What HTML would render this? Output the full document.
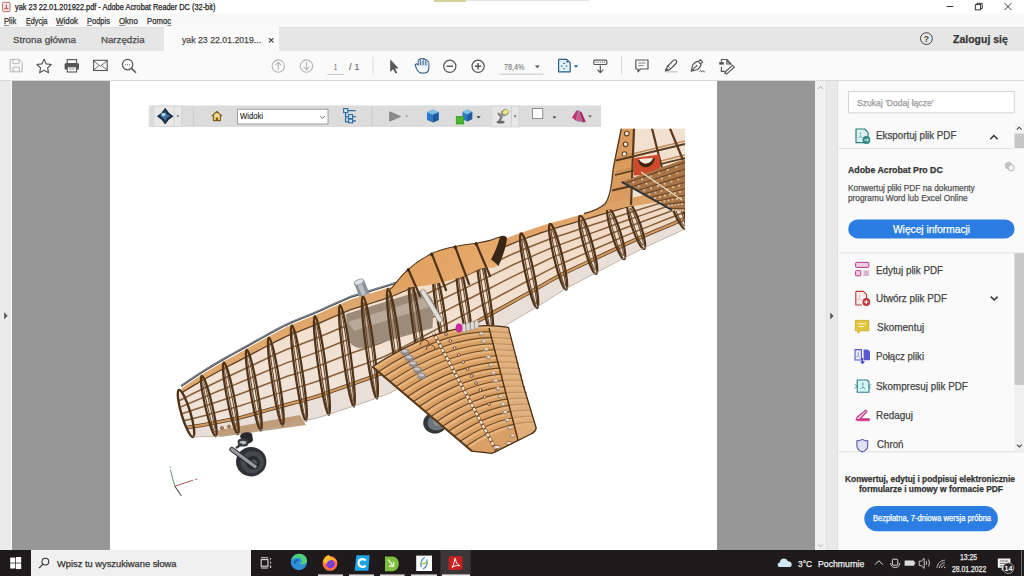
<!DOCTYPE html>
<html><head><meta charset="utf-8">
<style>
html,body{margin:0;padding:0;}
body{width:1024px;height:576px;overflow:hidden;position:relative;background:#fff;font-family:"Liberation Sans",sans-serif;}
.a{position:absolute;}
.t{position:absolute;white-space:nowrap;line-height:1;transform-origin:0 0;font-family:"Liberation Sans",sans-serif;}
.t u{text-decoration-thickness:0.5px;text-underline-offset:1.2px;text-decoration-color:#888;}
.t{-webkit-text-stroke:0.25px currentColor;}
svg{position:absolute;overflow:visible;}
</style></head><body>
<!-- title bar -->
<div class="a" style="left:0;top:0;width:1024px;height:14px;background:#ffffff"></div>
<div class="a" style="left:434px;top:0;width:32px;height:1.5px;background:#d6d09a"></div>
<div class="a" style="left:466px;top:0;width:123px;height:1px;background:#e4e4e4"></div>
<!-- menu bar -->
<div class="a" style="left:0;top:14px;width:1024px;height:13px;background:#f9f9f9"></div>
<!-- tab bar -->
<div class="a" style="left:0;top:27px;width:1024px;height:24px;background:#e6e6e6"></div>
<div class="a" style="left:0;top:27px;width:1024px;height:1px;background:#dedede"></div>
<div class="a" style="left:164px;top:27px;width:115px;height:24px;background:#fafafa"></div>
<!-- toolbar -->
<div class="a" style="left:0;top:51px;width:1024px;height:29px;background:#fafafa"></div>
<div class="a" style="left:0;top:80px;width:1024px;height:1px;background:#d9d9d9"></div>
<!-- left strip -->
<div class="a" style="left:0;top:81px;width:11px;height:469px;background:#ebebeb"></div>
<div class="a" style="left:11px;top:81px;width:1px;height:469px;background:#f8f8f8"></div>
<!-- canvas -->
<div class="a" style="left:12px;top:81px;width:803px;height:469px;background:#979797"></div>
<div class="a" style="left:110px;top:81px;width:607px;height:469px;background:#ffffff"></div>
<!-- right scroll strip -->
<div class="a" style="left:815px;top:81px;width:11px;height:469px;background:#f0f0f0"></div>
<div class="a" style="left:826px;top:81px;width:11px;height:469px;background:#e9e9e9"></div>
<div class="a" style="left:837px;top:81px;width:2px;height:469px;background:#f7f7f7"></div>
<!-- right panel -->
<div class="a" style="left:839px;top:81px;width:185px;height:469px;background:#fafafa"></div>
<!-- taskbar -->
<div class="a" style="left:0;top:550px;width:1024px;height:26px;background:#1f1a1b"></div>
<div class="a" style="left:31px;top:550px;width:220px;height:26px;background:#f0f0f0"></div>
<svg width="1024" height="576" viewBox="0 0 1024 576" style="left:0;top:0">
<defs><clipPath id="vc"><rect x="110" y="128.5" width="575" height="420"/></clipPath>
<linearGradient id="fus" x1="0" y1="0" x2="0.25" y2="1"><stop offset="0" stop-color="#efd3b8"/><stop offset="0.6" stop-color="#f3e0cf"/><stop offset="1" stop-color="#ede5de"/></linearGradient>
<linearGradient id="hump" x1="0" y1="0" x2="1" y2="0.3"><stop offset="0" stop-color="#dd9d5b"/><stop offset="1" stop-color="#e7ab6d"/></linearGradient>
<linearGradient id="wing" x1="0" y1="0" x2="1" y2="1"><stop offset="0" stop-color="#e2a86d"/><stop offset="1" stop-color="#d89b62"/></linearGradient>
</defs><g clip-path="url(#vc)">
<path d="M179.0 390.0 L187.8 384.1 L196.7 378.1 L205.5 372.6 L214.3 367.2 L223.2 361.9 L232.0 357.0 L240.8 352.1 L249.6 347.2 L258.5 342.2 L267.3 337.3 L276.1 332.6 L285.0 327.9 L293.8 323.9 L302.6 320.3 L311.5 316.8 L320.3 313.0 L329.1 309.0 L337.9 305.0 L346.8 301.1 L355.6 298.0 L364.4 295.3 L373.3 292.6 L382.1 289.8 L390.9 287.1 L399.8 283.8 L408.6 280.1 L417.4 276.3 L426.3 272.6 L435.1 268.8 L443.9 265.0 L452.7 261.3 L461.6 257.5 L470.4 253.8 L479.2 250.0 L488.1 246.3 L496.9 242.5 L505.7 238.8 L514.6 235.0 L523.4 231.9 L532.2 229.0 L541.1 226.0 L549.9 223.3 L558.7 221.0 L567.5 218.6 L576.4 216.2 L585.2 213.8 L594.0 211.3 L602.9 208.9 L611.7 206.6 L620.5 204.2 L629.4 201.9 L638.2 199.5 L647.0 197.1 L655.8 194.8 L664.7 192.4 L673.5 190.1 L682.3 187.7 L691.2 185.4 L700.0 183.0 L700.0 222.0 L691.4 226.0 L682.8 229.9 L674.2 233.9 L665.7 237.9 L657.1 241.9 L648.5 245.8 L639.9 249.8 L631.3 254.3 L622.7 258.8 L614.1 263.3 L605.5 267.8 L597.0 272.3 L588.4 276.8 L579.8 281.3 L571.2 285.8 L562.6 290.7 L554.0 296.1 L545.4 301.6 L536.9 307.0 L528.3 312.0 L519.7 317.1 L511.1 322.1 L502.5 327.1 L493.9 332.2 L485.3 337.2 L476.8 342.3 L468.2 347.3 L459.6 352.4 L451.0 357.4 L442.4 362.4 L433.8 367.5 L425.2 372.5 L416.6 377.6 L408.1 382.6 L399.5 387.6 L390.9 392.7 L382.3 396.0 L373.7 399.1 L365.1 402.2 L356.5 405.1 L348.0 407.9 L339.4 410.8 L330.8 413.7 L322.2 416.5 L313.6 418.7 L305.0 420.6 L296.4 422.4 L287.9 424.2 L279.3 426.0 L270.7 427.8 L262.1 429.7 L253.5 431.6 L244.9 433.1 L236.3 434.0 L227.7 434.9 L219.2 435.8 L210.6 436.4 L202.0 436.7 L193.4 437.0 L193.0 437.0 L190.0 432.7 L187.2 428.5 L184.6 424.2 L182.5 419.9 L180.7 415.6 L179.4 411.4 L178.6 407.1 L178.3 402.8 L178.3 398.5 L178.6 394.3 L179.0 390.0Z" fill="url(#fus)"/>
<path d="M187.7 427.4 L201.0 425.3 L214.3 422.9 L227.7 420.2 L241.0 417.5 L254.3 413.8 L267.7 410.0 L281.0 406.3 L294.3 402.6 L307.7 399.2 L321.0 395.1 L334.3 390.3 L347.7 385.6 L361.0 380.9 L374.3 376.2 L387.7 370.8 L401.0 363.7 L414.3 356.3 L427.7 348.9 L441.0 341.5 L454.3 334.1 L467.7 326.8 L481.0 319.4 L494.3 312.0 L507.7 304.6 L521.0 297.2 L534.3 289.9 L547.7 282.2 L561.0 274.8 L574.3 268.4 L587.7 262.1 L601.0 255.8 L614.3 249.5 L627.7 243.2 L641.0 237.3 L654.3 231.6 L667.7 226.0 L681.0 220.3 L694.3 214.9 L707.7 214.2 L700.0 222.0 L687.0 228.0 L674.0 234.0 L661.0 240.0 L648.0 246.0 L635.1 252.3 L622.1 259.1 L609.1 265.9 L596.1 272.8 L583.1 279.6 L570.1 286.4 L557.1 294.2 L544.1 302.4 L531.1 310.3 L518.1 318.0 L505.2 325.6 L492.2 333.2 L479.2 340.8 L466.2 348.5 L453.2 356.1 L440.2 363.7 L427.2 371.4 L414.2 379.0 L401.2 386.6 L388.2 393.8 L375.3 398.6 L362.3 403.2 L349.3 407.5 L336.3 411.8 L323.3 416.2 L310.3 419.4 L297.3 422.2 L284.3 424.9 L271.3 427.7 L258.3 430.5 L245.4 433.1 L232.4 434.4 L219.4 435.8 L206.4 436.5 L193.4 437.0Z" fill="#e9dfd8"/>
<path d="M179.3 400.8 L192.6 393.8 L205.9 387.2 L219.3 380.7 L232.6 374.6 L245.9 368.3 L259.3 362.0 L272.6 355.7 L285.9 349.7 L299.3 344.7 L312.6 339.8 L325.9 334.2 L339.3 328.6 L352.6 323.4 L365.9 319.1 L379.3 314.6 L392.6 309.6 L405.9 303.5 L419.3 297.3 L432.6 291.1 L445.9 285.0 L459.3 278.8 L472.6 272.6 L485.9 266.4 L499.3 260.2 L512.6 254.0 L525.9 248.5 L539.3 243.1 L552.6 238.1 L565.9 233.7 L579.3 229.3 L592.6 224.8 L605.9 220.4 L619.3 216.0 L632.6 211.7 L645.9 207.6 L659.3 203.4 L672.6 199.2 L685.9 195.1 L699.3 192.4" fill="none" stroke="#86603c" stroke-width="1.6"/>
<path d="M179.7 407.4 L193.1 401.7 L206.4 396.1 L219.7 390.5 L233.1 385.4 L246.4 379.7 L259.7 374.0 L273.1 368.4 L286.4 362.9 L299.7 358.4 L313.1 353.6 L326.4 348.2 L339.7 342.8 L353.1 337.7 L366.4 333.4 L379.7 328.6 L393.1 323.1 L406.4 316.7 L419.7 310.2 L433.1 303.7 L446.4 297.3 L459.7 290.8 L473.1 284.3 L486.4 277.8 L499.7 271.3 L513.1 264.8 L526.4 258.9 L539.7 252.9 L553.1 247.3 L566.4 242.4 L579.7 237.5 L593.1 232.6 L606.4 227.7 L619.7 222.8 L633.1 218.1 L646.4 213.6 L659.7 209.0 L673.1 204.5 L686.4 200.0 L699.7 197.8" fill="none" stroke="#86603c" stroke-width="1.5"/>
<path d="M181.3 414.1 L194.6 409.5 L208.0 405.0 L221.3 400.4 L234.6 396.1 L248.0 391.1 L261.3 386.0 L274.6 381.0 L288.0 376.1 L301.3 372.0 L314.6 367.4 L328.0 362.3 L341.3 357.1 L354.6 352.1 L368.0 347.6 L381.3 342.7 L394.6 336.6 L408.0 329.9 L421.3 323.1 L434.6 316.3 L448.0 309.6 L461.3 302.8 L474.6 296.0 L488.0 289.2 L501.3 282.4 L514.6 275.6 L528.0 269.2 L541.3 262.7 L554.6 256.4 L568.0 251.1 L581.3 245.7 L594.6 240.3 L608.0 234.9 L621.3 229.6 L634.6 224.5 L648.0 219.6 L661.3 214.7 L674.6 209.7 L688.0 205.0 L701.3 203.3" fill="none" stroke="#86603c" stroke-width="1.6"/>
<path d="M184.0 420.8 L197.3 417.4 L210.6 414.0 L224.0 410.3 L237.3 406.8 L250.6 402.4 L264.0 398.0 L277.3 393.6 L290.6 389.4 L304.0 385.6 L317.3 381.2 L330.6 376.3 L344.0 371.3 L357.3 366.5 L370.6 361.9 L384.0 356.7 L397.3 350.2 L410.6 343.1 L424.0 336.0 L437.3 328.9 L450.6 321.8 L464.0 314.8 L477.3 307.7 L490.6 300.6 L504.0 293.5 L517.3 286.4 L530.6 279.5 L544.0 272.4 L557.3 265.6 L570.6 259.8 L584.0 253.9 L597.3 248.0 L610.6 242.2 L624.0 236.4 L637.3 230.9 L650.6 225.6 L664.0 220.3 L677.3 215.0 L690.6 210.0 L704.0 208.7" fill="none" stroke="#86603c" stroke-width="1.5"/>
<path d="M187.7 427.4 L201.0 425.3 L214.3 422.9 L227.7 420.2 L241.0 417.5 L254.3 413.8 L267.7 410.0 L281.0 406.3 L294.3 402.6 L307.7 399.2 L321.0 395.1 L334.3 390.3 L347.7 385.6 L361.0 380.9 L374.3 376.2 L387.7 370.8 L401.0 363.7 L414.3 356.3 L427.7 348.9 L441.0 341.5 L454.3 334.1 L467.7 326.8 L481.0 319.4 L494.3 312.0 L507.7 304.6 L521.0 297.2 L534.3 289.9 L547.7 282.2 L561.0 274.8 L574.3 268.4 L587.7 262.1 L601.0 255.8 L614.3 249.5 L627.7 243.2 L641.0 237.3 L654.3 231.6 L667.7 226.0 L681.0 220.3 L694.3 214.9 L707.7 214.2" fill="none" stroke="#5e3e22" stroke-width="3.8"/>
<path d="M187.7 427.4 L201.0 425.3 L214.3 422.9 L227.7 420.2 L241.0 417.5 L254.3 413.8 L267.7 410.0 L281.0 406.3 L294.3 402.6 L307.7 399.2 L321.0 395.1 L334.3 390.3 L347.7 385.6 L361.0 380.9 L374.3 376.2 L387.7 370.8 L401.0 363.7 L414.3 356.3 L427.7 348.9 L441.0 341.5 L454.3 334.1 L467.7 326.8 L481.0 319.4 L494.3 312.0 L507.7 304.6 L521.0 297.2 L534.3 289.9 L547.7 282.2 L561.0 274.8 L574.3 268.4 L587.7 262.1 L601.0 255.8 L614.3 249.5 L627.7 243.2 L641.0 237.3 L654.3 231.6 L667.7 226.0 L681.0 220.3 L694.3 214.9 L707.7 214.2" fill="none" stroke="#d29a5e" stroke-width="2.2"/>
<path d="M214 431 L300 415 L306 425 L220 437 Z" fill="#b89068" opacity="0.85"/>
<circle cx="222" cy="428" r="1.6" fill="#a88458" stroke="#6a4a2a" stroke-width="0.6"/>
<circle cx="229" cy="426.5" r="1.6" fill="#a88458" stroke="#6a4a2a" stroke-width="0.6"/>
<circle cx="236" cy="425" r="1.6" fill="#a88458" stroke="#6a4a2a" stroke-width="0.6"/>
<path d="M182.0 388.0 L192.6 380.9 L203.1 374.0 L213.7 367.6 L224.3 361.2 L234.9 355.4 L245.4 349.5 L256.0 343.6 L266.6 337.7 L277.1 332.1 L287.7 326.4 L298.3 322.1 L308.9 317.8 L319.4 313.4 L330.0 308.6 L340.6 303.9 L351.1 299.4 L361.7 296.1 L372.3 292.9 L382.9 289.6 L393.4 286.4 L404.0 282.0 L414.6 277.5 L425.1 273.0 L435.7 268.5 L446.3 264.0 L456.9 259.6 L467.4 255.1 L478.0 250.6 L488.6 246.1 L499.1 241.6 L509.7 237.1 L520.3 232.9 L530.9 229.4 L541.4 225.9 L552.0 222.8 L562.6 219.9 L573.1 217.1 L583.7 214.2 L594.3 211.3 L604.9 208.4 L615.4 205.6 L626.0 202.8 L636.6 199.9 L647.1 197.1 L657.7 194.3 L668.3 191.5 L678.9 188.6 L689.4 185.8 L700.0 183.0 L699.5 186.9 L689.0 189.4 L678.4 192.3 L667.8 195.3 L657.3 198.4 L646.7 201.4 L636.1 204.4 L625.5 207.5 L615.0 210.6 L604.4 213.6 L593.8 216.8 L583.3 220.0 L572.7 223.1 L562.1 226.2 L551.5 229.3 L541.0 232.8 L530.4 236.7 L519.8 240.5 L509.3 244.9 L498.7 249.5 L488.1 254.2 L477.5 258.8 L467.0 263.5 L456.4 268.2 L445.8 272.8 L435.3 277.5 L424.7 282.2 L414.1 286.8 L403.5 291.5 L393.0 296.0 L382.4 299.6 L371.8 303.0 L361.3 306.3 L350.7 309.6 L340.1 314.1 L329.5 318.7 L319.0 323.3 L308.4 327.7 L297.8 331.8 L287.3 335.9 L276.7 341.2 L266.1 346.5 L255.5 352.1 L245.0 357.6 L234.4 363.1 L223.8 368.5 L213.3 374.3 L202.7 380.2 L192.1 386.4 L181.5 392.9Z" fill="#dea366" opacity="0.95"/>
<path d="M180.0 387.7 L187.4 382.7 L194.8 377.7 L202.2 373.0 L209.7 368.4 L217.1 363.9 L224.5 359.5 L231.9 355.4 L239.3 351.3 L246.7 347.2 L254.1 343.1 L261.6 338.9 L269.0 334.8 L276.4 330.9 L283.8 326.9 L291.2 323.3 L298.6 320.3 L306.0 317.4 L313.4 314.4 L320.9 311.1 L328.3 307.8 L335.7 304.5 L343.1 301.1 L350.5 298.0 L357.9 295.7 L365.3 293.4 L372.8 291.1 L380.2 288.8 L387.6 286.6 L395.0 284.2" fill="none" stroke="#ffffff" stroke-width="1.6"/>
<path d="M181.0 386.1 L188.4 381.1 L195.8 376.1 L203.2 371.4 L210.7 366.8 L218.1 362.3 L225.5 358.0 L232.9 353.9 L240.3 349.8 L247.7 345.7 L255.1 341.5 L262.6 337.4 L270.0 333.3 L277.4 329.3 L284.8 325.4 L292.2 321.9 L299.6 318.9 L307.0 316.0 L314.4 313.0 L321.9 309.7 L329.3 306.3 L336.7 303.0 L344.1 299.7 L351.5 296.6 L358.9 294.4 L366.3 292.1 L373.8 289.8 L381.2 287.5 L388.6 285.2 L396.0 282.8" fill="none" stroke="#4a4c52" stroke-width="2.2"/>
<path d="M181.0 385.7 L188.4 380.7 L195.8 375.7 L203.2 371.0 L210.7 366.4 L218.1 361.9 L225.5 357.6 L232.9 353.5 L240.3 349.4 L247.7 345.3 L255.1 341.1 L262.6 337.0 L270.0 332.9 L277.4 328.9 L284.8 325.0 L292.2 321.5 L299.6 318.5 L307.0 315.6 L314.4 312.6 L321.9 309.3 L329.3 305.9 L336.7 302.6 L344.1 299.3 L351.5 296.2 L358.9 294.0 L366.3 291.7 L373.8 289.4 L381.2 287.1 L388.6 284.8 L396.0 282.4" fill="none" stroke="#a8acb2" stroke-width="0.7"/>
<path d="M181.5 392.9 L192.1 386.4 L202.7 380.2 L213.3 374.3 L223.8 368.5 L234.4 363.1 L245.0 357.6 L255.5 352.1 L266.1 346.5 L276.7 341.2 L287.3 335.9 L297.8 331.8 L308.4 327.7 L319.0 323.3 L329.5 318.7 L340.1 314.1 L350.7 309.6 L361.3 306.3 L371.8 303.0 L382.4 299.6 L393.0 296.0 L403.5 291.5 L414.1 286.8 L424.7 282.2 L435.3 277.5 L445.8 272.8 L456.4 268.2 L467.0 263.5 L477.5 258.8 L488.1 254.2 L498.7 249.5 L509.3 244.9 L519.8 240.5 L530.4 236.7 L541.0 232.8 L551.5 229.3 L562.1 226.2 L572.7 223.1 L583.3 220.0 L593.8 216.8 L604.4 213.6 L615.0 210.6 L625.5 207.5 L636.1 204.4 L646.7 201.4 L657.3 198.4 L667.8 195.3 L678.4 192.3 L689.0 189.4 L699.5 186.9" fill="none" stroke="#5e3e22" stroke-width="1.3"/>
<path d="M346 314 L420 291 Q433 294 433.5 305 L432.5 328 L362 348.5 Q349 347 347.5 336 Z" fill="#9c8b78"/>
<path d="M348 322 L424 298 Q430 300 432 306 L354 331 Z" fill="#b8aa9a"/>
<ellipse cx="186.0" cy="413.5" rx="4.5" ry="24.5" transform="rotate(-16.6 186.0 413.5)" fill="none" stroke="#4e321a" stroke-width="2.4"/>
<ellipse cx="208.8" cy="406.1" rx="3.5" ry="31.0" transform="rotate(-13.1 208.8 406.1)" fill="none" stroke="#4e321a" stroke-width="2.2"/>
<ellipse cx="208.8" cy="407.1" rx="1.3" ry="26.0" transform="rotate(-13.1 208.8 406.1)" fill="none" stroke="#6a4a2a" stroke-width="1.1"/>
<ellipse cx="230.8" cy="398.3" rx="3.6" ry="36.5" transform="rotate(-11.1 230.8 398.3)" fill="none" stroke="#4e321a" stroke-width="2.2"/>
<ellipse cx="230.8" cy="399.3" rx="1.4" ry="31.5" transform="rotate(-11.1 230.8 398.3)" fill="none" stroke="#6a4a2a" stroke-width="1.1"/>
<ellipse cx="253.8" cy="390.1" rx="3.6" ry="40.9" transform="rotate(-9.9 253.8 390.1)" fill="none" stroke="#4e321a" stroke-width="2.2"/>
<ellipse cx="253.8" cy="391.1" rx="1.4" ry="35.9" transform="rotate(-9.9 253.8 390.1)" fill="none" stroke="#6a4a2a" stroke-width="1.1"/>
<ellipse cx="275.8" cy="381.6" rx="3.7" ry="44.6" transform="rotate(-9.0 275.8 381.6)" fill="none" stroke="#4e321a" stroke-width="2.2"/>
<ellipse cx="275.8" cy="382.6" rx="1.5" ry="39.6" transform="rotate(-9.0 275.8 381.6)" fill="none" stroke="#6a4a2a" stroke-width="1.1"/>
<ellipse cx="298.9" cy="373.1" rx="3.7" ry="48.2" transform="rotate(-8.4 298.9 373.1)" fill="none" stroke="#4e321a" stroke-width="2.2"/>
<ellipse cx="298.9" cy="374.1" rx="1.5" ry="43.2" transform="rotate(-8.4 298.9 373.1)" fill="none" stroke="#6a4a2a" stroke-width="1.1"/>
<ellipse cx="321.9" cy="365.6" rx="3.8" ry="49.9" transform="rotate(-8.1 321.9 365.6)" fill="none" stroke="#4e321a" stroke-width="2.2"/>
<ellipse cx="321.9" cy="366.6" rx="1.6" ry="44.9" transform="rotate(-8.1 321.9 365.6)" fill="none" stroke="#6a4a2a" stroke-width="1.1"/>
<ellipse cx="346.9" cy="355.8" rx="3.8" ry="51.3" transform="rotate(-7.8 346.9 355.8)" fill="none" stroke="#4e321a" stroke-width="2.2"/>
<ellipse cx="346.9" cy="356.8" rx="1.6" ry="46.3" transform="rotate(-7.8 346.9 355.8)" fill="none" stroke="#6a4a2a" stroke-width="1.1"/>
<ellipse cx="369.9" cy="347.5" rx="3.9" ry="51.6" transform="rotate(-7.8 369.9 347.5)" fill="none" stroke="#4e321a" stroke-width="2.2"/>
<ellipse cx="369.9" cy="348.5" rx="1.7" ry="46.6" transform="rotate(-7.8 369.9 347.5)" fill="none" stroke="#6a4a2a" stroke-width="1.1"/>
<ellipse cx="395.0" cy="338.0" rx="3.9" ry="49.8" transform="rotate(-8.1 395.0 338.0)" fill="none" stroke="#4e321a" stroke-width="2.2"/>
<ellipse cx="395.0" cy="339.0" rx="1.7" ry="44.8" transform="rotate(-8.1 395.0 338.0)" fill="none" stroke="#6a4a2a" stroke-width="1.1"/>
<ellipse cx="417.0" cy="327.4" rx="4.0" ry="47.6" transform="rotate(-8.5 417.0 327.4)" fill="none" stroke="#4e321a" stroke-width="2.2"/>
<ellipse cx="417.0" cy="328.4" rx="1.8" ry="42.6" transform="rotate(-8.5 417.0 327.4)" fill="none" stroke="#6a4a2a" stroke-width="1.1"/>
<ellipse cx="441.0" cy="315.2" rx="4.0" ry="45.6" transform="rotate(-8.8 441.0 315.2)" fill="none" stroke="#4e321a" stroke-width="2.2"/>
<ellipse cx="441.0" cy="316.2" rx="1.8" ry="40.6" transform="rotate(-8.8 441.0 315.2)" fill="none" stroke="#6a4a2a" stroke-width="1.1"/>
<ellipse cx="464.0" cy="303.6" rx="4.0" ry="43.8" transform="rotate(-9.2 464.0 303.6)" fill="none" stroke="#4e321a" stroke-width="2.2"/>
<ellipse cx="464.0" cy="304.6" rx="1.8" ry="38.8" transform="rotate(-9.2 464.0 303.6)" fill="none" stroke="#6a4a2a" stroke-width="1.1"/>
<ellipse cx="485.0" cy="293.0" rx="4.1" ry="42.1" transform="rotate(-9.6 485.0 293.0)" fill="none" stroke="#4e321a" stroke-width="2.2"/>
<ellipse cx="485.0" cy="294.0" rx="1.9" ry="37.1" transform="rotate(-9.6 485.0 293.0)" fill="none" stroke="#6a4a2a" stroke-width="1.1"/>
<ellipse cx="529.1" cy="270.7" rx="4.2" ry="38.2" transform="rotate(-12.1 529.1 270.7)" fill="none" stroke="#4e321a" stroke-width="2.2"/>
<ellipse cx="529.1" cy="271.7" rx="2.0" ry="33.2" transform="rotate(-12.1 529.1 270.7)" fill="none" stroke="#6a4a2a" stroke-width="1.1"/>
<ellipse cx="558.1" cy="256.8" rx="4.2" ry="33.9" transform="rotate(-13.6 558.1 256.8)" fill="none" stroke="#4e321a" stroke-width="2.2"/>
<ellipse cx="558.1" cy="257.8" rx="2.0" ry="28.9" transform="rotate(-13.6 558.1 256.8)" fill="none" stroke="#6a4a2a" stroke-width="1.1"/>
<ellipse cx="588.1" cy="244.8" rx="4.3" ry="30.1" transform="rotate(-15.4 588.1 244.8)" fill="none" stroke="#4e321a" stroke-width="2.2"/>
<ellipse cx="588.1" cy="245.8" rx="2.1" ry="25.1" transform="rotate(-15.4 588.1 244.8)" fill="none" stroke="#6a4a2a" stroke-width="1.1"/>
<ellipse cx="616.2" cy="233.6" rx="4.4" ry="26.8" transform="rotate(-17.4 616.2 233.6)" fill="none" stroke="#4e321a" stroke-width="2.2"/>
<ellipse cx="616.2" cy="234.6" rx="2.2" ry="21.8" transform="rotate(-17.4 616.2 233.6)" fill="none" stroke="#6a4a2a" stroke-width="1.1"/>
<ellipse cx="636.2" cy="225.8" rx="4.4" ry="24.4" transform="rotate(-19.1 636.2 225.8)" fill="none" stroke="#4e321a" stroke-width="2.2"/>
<ellipse cx="636.2" cy="226.8" rx="2.2" ry="19.4" transform="rotate(-19.1 636.2 225.8)" fill="none" stroke="#6a4a2a" stroke-width="1.1"/>
<ellipse cx="678.2" cy="210.5" rx="4.5" ry="20.6" transform="rotate(-22.9 678.2 210.5)" fill="none" stroke="#4e321a" stroke-width="2.2"/>
<ellipse cx="678.2" cy="211.5" rx="2.3" ry="15.6" transform="rotate(-22.9 678.2 210.5)" fill="none" stroke="#6a4a2a" stroke-width="1.1"/>
<path d="M193.0 437.0 L203.3 436.6 L213.7 436.3 L224.0 435.3 L234.4 434.2 L244.7 433.1 L255.1 431.2 L265.4 429.0 L275.8 426.8 L286.1 424.6 L296.5 422.4 L306.8 420.2 L317.2 418.0 L327.5 414.8 L337.9 411.3 L348.2 407.9 L358.6 404.4 L368.9 400.9 L379.2 397.1 L389.6 393.3 L399.9 387.4 L410.3 381.3 L420.6 375.2 L431.0 369.1 L441.3 363.1 L451.7 357.0 L462.0 350.9 L472.4 344.8 L482.7 338.8 L493.1 332.7 L503.4 326.6 L513.8 320.5 L524.1 314.5 L534.4 308.4 L544.8 302.0 L555.1 295.4 L565.5 288.8 L575.8 283.4 L586.2 277.9 L596.5 272.5 L606.9 267.1 L617.2 261.7 L627.6 256.3 L637.9 250.8 L648.3 245.9 L658.6 241.1 L669.0 236.4 L679.3 231.6 L689.7 226.8 L700.0 222.0" fill="none" stroke="#b8a898" stroke-width="0.8"/>
<path d="M390.0 289.0 C383.8 289.4 389.0 290.8 392.0 287.5 C395.0 284.2 401.6 274.9 408.2 269.3 C414.8 263.7 423.9 257.4 431.7 253.6 C439.5 249.8 447.7 248.2 455.1 246.5 C462.5 244.8 470.4 244.2 476.0 243.2 C481.6 242.2 484.9 241.7 489.0 240.6 C493.1 239.5 498.1 237.4 500.7 236.7 C503.3 236.0 504.2 234.9 504.6 236.5 C505.0 238.1 504.1 241.2 503.0 246.0 C501.9 250.8 501.7 261.6 498.0 265.4 C494.3 269.1 487.1 266.6 481.0 268.5 C474.9 270.4 470.3 274.3 461.6 277.0 C452.9 279.7 440.9 282.9 429.0 284.9 C417.1 286.9 396.2 288.6 390.0 289.0Z" fill="url(#hump)"/>
<path d="M390.0 289.0 C390.3 288.8 389.0 290.8 392.0 287.5 C395.0 284.2 401.6 274.9 408.2 269.3 C414.8 263.7 423.9 257.4 431.7 253.6 C439.5 249.8 447.7 248.2 455.1 246.5 C462.5 244.8 470.4 244.2 476.0 243.2 C481.6 242.2 484.9 241.7 489.0 240.6 C493.1 239.5 498.1 237.4 500.7 236.7 C503.3 236.0 504.0 236.5 504.6 236.5" fill="none" stroke="#4e321a" stroke-width="1.1"/>
<path d="M500 236.9 C503 235.6 506.5 235.8 507 238.5 C506 248 502 258 498.5 266 C496 263 493 261 491 259.5 C495 252 498 244 500 236.9Z" fill="#3a2614"/>
<path d="M408.2 269.3 L420 296" stroke="#4e321a" stroke-width="2.2" stroke-linecap="round" fill="none"/>
<circle cx="408.2" cy="270.1" r="1.5" fill="#3a2614"/>
<path d="M431.7 253.6 L446 290" stroke="#4e321a" stroke-width="2.2" stroke-linecap="round" fill="none"/>
<circle cx="431.7" cy="254.4" r="1.5" fill="#3a2614"/>
<path d="M455.1 246.5 L469 284" stroke="#4e321a" stroke-width="2.2" stroke-linecap="round" fill="none"/>
<circle cx="455.1" cy="247.3" r="1.5" fill="#3a2614"/>
<path d="M476 243.2 L490 276" stroke="#4e321a" stroke-width="2.2" stroke-linecap="round" fill="none"/>
<circle cx="476" cy="244.0" r="1.5" fill="#3a2614"/>
<path d="M354 283.5 L364 280 L369.5 293.5 L359.5 297 Z" fill="#8a9098"/>
<path d="M356.5 283 L361 281.5 L366 294 L362 295.5 Z" fill="#b8bec4"/>
<ellipse cx="359" cy="282" rx="5" ry="2.6" transform="rotate(-20 359 282)" fill="#dde0e4" stroke="#7a8088" stroke-width="0.6"/>
<path d="M621.3 128.5 L685 128.5 L685 195 L584 213.6 C598 211 606 206 609 197 C612 188 612 176 613.3 168 Z" fill="#f2e0d0"/>
<path d="M621.3 128.5 L635 128.5 L630 200 L640 196 L600 210 C608 204 611 196 612 186 L613.3 168 Z" fill="#d99b5e"/>
<path d="M584 213.6 C592 212 600 209 605 204 L640 196 L660 190 L685 192 L685 198 Z" fill="#dca266"/>
<path d="M621.3 128.5 L613.3 168 C612 180 611 196 605 204 C598 210 590 212 584 213.6" fill="none" stroke="#5a3a1e" stroke-width="1.4"/>
<circle cx="626.8" cy="133.6" r="2.3" fill="#f6efe4" stroke="#5e3e20" stroke-width="1.1"/>
<circle cx="625.6" cy="144.3" r="2.3" fill="#f6efe4" stroke="#5e3e20" stroke-width="1.1"/>
<circle cx="624.4" cy="154" r="2.3" fill="#f6efe4" stroke="#5e3e20" stroke-width="1.1"/>
<path d="M616 160.5 L685 144 M615 175 L685 158 M612 190.5 L640 184" stroke="#5a3a1e" stroke-width="1.8" fill="none"/>
<path d="M618 157.5 L685 141 M616 172 L685 155" stroke="#c48a52" stroke-width="1.4" fill="none"/>
<path d="M634 128.5 L631 205 M652 128.5 L664 176 M670 128.5 L685 165" stroke="#5a3a1e" stroke-width="2.2" fill="none"/>
<path d="M633.5 158 L659.5 154.5 L660.5 173.5 L634 175.5 Z" fill="#cf4a2a"/>
<path d="M638 160 C640 170 652 170 655 158.5 L652 158 C650 165 642 166 641 160 Z" fill="#3a2614"/>
<path d="M639 159 C641 165 651 165 653 158 Z" fill="#f4ece0"/>
<path d="M621.7 181.8 L685 159 L685 212 L671.8 210 Z" fill="#a87548"/>
<path d="M624.8 183.6 L685 162.3" stroke="#6a4324" stroke-width="1.1" fill="none"/>
<circle cx="633.4" cy="182.3" r="1.1" fill="#d8bc98"/>
<circle cx="642.0" cy="179.3" r="1.1" fill="#d8bc98"/>
<circle cx="650.6" cy="176.3" r="1.1" fill="#d8bc98"/>
<circle cx="659.2" cy="173.2" r="1.1" fill="#d8bc98"/>
<circle cx="667.8" cy="170.2" r="1.1" fill="#d8bc98"/>
<circle cx="676.4" cy="167.1" r="1.1" fill="#d8bc98"/>
<path d="M631.1 187.1 L685 168.9" stroke="#6a4324" stroke-width="1.1" fill="none"/>
<circle cx="638.8" cy="186.3" r="1.1" fill="#d8bc98"/>
<circle cx="646.5" cy="183.7" r="1.1" fill="#d8bc98"/>
<circle cx="654.2" cy="181.1" r="1.1" fill="#d8bc98"/>
<circle cx="661.9" cy="178.5" r="1.1" fill="#d8bc98"/>
<circle cx="669.6" cy="175.9" r="1.1" fill="#d8bc98"/>
<circle cx="677.3" cy="173.3" r="1.1" fill="#d8bc98"/>
<path d="M637.4 190.6 L685 175.6" stroke="#6a4324" stroke-width="1.1" fill="none"/>
<circle cx="644.2" cy="190.3" r="1.1" fill="#d8bc98"/>
<circle cx="651.0" cy="188.1" r="1.1" fill="#d8bc98"/>
<circle cx="657.8" cy="186.0" r="1.1" fill="#d8bc98"/>
<circle cx="664.6" cy="183.8" r="1.1" fill="#d8bc98"/>
<circle cx="671.4" cy="181.7" r="1.1" fill="#d8bc98"/>
<circle cx="678.2" cy="179.5" r="1.1" fill="#d8bc98"/>
<path d="M643.6 194.1 L685 182.2" stroke="#6a4324" stroke-width="1.1" fill="none"/>
<circle cx="649.5" cy="194.2" r="1.1" fill="#d8bc98"/>
<circle cx="655.4" cy="192.5" r="1.1" fill="#d8bc98"/>
<circle cx="661.4" cy="190.8" r="1.1" fill="#d8bc98"/>
<circle cx="667.3" cy="189.1" r="1.1" fill="#d8bc98"/>
<circle cx="673.2" cy="187.4" r="1.1" fill="#d8bc98"/>
<circle cx="679.1" cy="185.7" r="1.1" fill="#d8bc98"/>
<path d="M649.9 197.7 L685 188.8" stroke="#6a4324" stroke-width="1.1" fill="none"/>
<circle cx="654.9" cy="198.2" r="1.1" fill="#d8bc98"/>
<circle cx="659.9" cy="196.9" r="1.1" fill="#d8bc98"/>
<circle cx="664.9" cy="195.7" r="1.1" fill="#d8bc98"/>
<circle cx="669.9" cy="194.4" r="1.1" fill="#d8bc98"/>
<circle cx="675.0" cy="193.1" r="1.1" fill="#d8bc98"/>
<circle cx="680.0" cy="191.9" r="1.1" fill="#d8bc98"/>
<path d="M656.1 201.2 L685 195.4" stroke="#6a4324" stroke-width="1.1" fill="none"/>
<circle cx="660.3" cy="202.2" r="1.1" fill="#d8bc98"/>
<circle cx="664.4" cy="201.3" r="1.1" fill="#d8bc98"/>
<circle cx="668.5" cy="200.5" r="1.1" fill="#d8bc98"/>
<circle cx="672.6" cy="199.7" r="1.1" fill="#d8bc98"/>
<circle cx="676.8" cy="198.9" r="1.1" fill="#d8bc98"/>
<circle cx="680.9" cy="198.1" r="1.1" fill="#d8bc98"/>
<path d="M662.4 204.7 L685 202.1" stroke="#6a4324" stroke-width="1.1" fill="none"/>
<circle cx="668.9" cy="205.8" r="1.1" fill="#d8bc98"/>
<circle cx="672.1" cy="205.4" r="1.1" fill="#d8bc98"/>
<circle cx="675.3" cy="205.0" r="1.1" fill="#d8bc98"/>
<circle cx="678.5" cy="204.6" r="1.1" fill="#d8bc98"/>
<circle cx="681.8" cy="204.2" r="1.1" fill="#d8bc98"/>
<path d="M668.7 208.2 L685 208.7" stroke="#6a4324" stroke-width="1.1" fill="none"/>
<circle cx="673.3" cy="210.2" r="1.1" fill="#d8bc98"/>
<circle cx="675.7" cy="210.2" r="1.1" fill="#d8bc98"/>
<circle cx="678.0" cy="210.3" r="1.1" fill="#d8bc98"/>
<circle cx="680.3" cy="210.4" r="1.1" fill="#d8bc98"/>
<circle cx="682.7" cy="210.4" r="1.1" fill="#d8bc98"/>
<path d="M641 172 L682 200" stroke="#efdcc0" stroke-width="1.2" fill="none"/>
<path d="M621.7 181.8 L671.8 210" stroke="#26313c" stroke-width="1.9" fill="none"/>
<ellipse cx="435" cy="423" rx="11.8" ry="10.6" fill="#34363a"/>
<ellipse cx="436.5" cy="422.5" rx="9" ry="8" fill="#6e747c"/>
<ellipse cx="438" cy="421.5" rx="5" ry="4.5" fill="#8a9098"/>
<path d="M372.5 366.7 Q447.9 317.0 508.4 327.3 L523 384.5 L536.2 428 C535.6 431 534 432.5 531 434 L492 453.4 L472 451.2 Z" fill="#d9a066"/>
<path d="M372.5 366.7 Q447.9 317.0 508.4 327.3 L509.1 330.0 Q449.5 319.9 375.1 368.9Z" fill="#e6b47c"/>
<path d="M378.4 371.7 Q451.4 323.5 510.0 333.2 L510.8 335.9 Q452.9 326.4 381.0 373.9Z" fill="#e6b47c"/>
<path d="M384.2 376.6 Q454.8 330.0 511.7 339.1 L512.4 341.8 Q456.3 332.9 386.8 378.9Z" fill="#e6b47c"/>
<path d="M390.1 381.6 Q458.2 336.5 513.3 345.1 L514.0 347.7 Q459.8 339.4 392.7 383.8Z" fill="#e6b47c"/>
<path d="M395.9 386.6 Q461.6 343.0 514.9 351.0 L515.7 353.7 Q463.2 346.0 398.5 388.8Z" fill="#e6b47c"/>
<path d="M401.8 391.6 Q465.1 349.5 516.6 356.9 L517.3 359.6 Q466.6 352.5 404.4 393.8Z" fill="#e6b47c"/>
<path d="M407.6 396.5 Q468.5 356.0 518.2 362.8 L518.9 365.5 Q470.0 359.0 410.3 398.8Z" fill="#e6b47c"/>
<path d="M413.5 401.5 Q471.9 362.5 519.8 368.8 L520.6 371.4 Q473.4 365.5 416.1 403.7Z" fill="#e6b47c"/>
<path d="M419.3 406.5 Q475.3 369.0 521.5 374.7 L522.2 377.4 Q476.9 372.0 422.0 408.7Z" fill="#e6b47c"/>
<path d="M425.2 411.4 Q478.7 375.6 523.1 380.6 L523.9 383.3 Q480.3 378.5 427.8 413.7Z" fill="#e6b47c"/>
<path d="M431.0 416.4 Q482.2 382.1 524.8 386.5 L525.5 389.2 Q483.7 385.0 433.7 418.6Z" fill="#e6b47c"/>
<path d="M436.9 421.4 Q485.6 388.6 526.4 392.5 L527.1 395.1 Q487.1 391.5 439.5 423.6Z" fill="#e6b47c"/>
<path d="M442.7 426.3 Q489.0 395.1 528.0 398.4 L528.8 401.0 Q490.5 398.0 445.4 428.6Z" fill="#e6b47c"/>
<path d="M448.6 431.3 Q492.4 401.6 529.7 404.3 L530.4 407.0 Q494.0 404.5 451.2 433.6Z" fill="#e6b47c"/>
<path d="M454.4 436.3 Q495.8 408.1 531.3 410.2 L532.0 412.9 Q497.4 411.0 457.1 438.5Z" fill="#e6b47c"/>
<path d="M460.3 441.3 Q499.3 414.6 532.9 416.2 L533.7 418.8 Q500.8 417.5 462.9 443.5Z" fill="#e6b47c"/>
<path d="M466.1 446.2 Q502.7 421.1 534.6 422.1 L535.3 424.7 Q504.2 424.0 468.8 448.5Z" fill="#e6b47c"/>
<path d="M378.4 371.7 Q451.4 323.5 510.0 333.2" stroke="#6e4622" stroke-width="1.15" fill="none"/>
<path d="M384.2 376.6 Q454.8 330.0 511.7 339.1" stroke="#6e4622" stroke-width="1.15" fill="none"/>
<path d="M390.1 381.6 Q458.2 336.5 513.3 345.1" stroke="#6e4622" stroke-width="1.15" fill="none"/>
<path d="M395.9 386.6 Q461.6 343.0 514.9 351.0" stroke="#6e4622" stroke-width="1.15" fill="none"/>
<path d="M401.8 391.6 Q465.1 349.5 516.6 356.9" stroke="#6e4622" stroke-width="1.15" fill="none"/>
<path d="M407.6 396.5 Q468.5 356.0 518.2 362.8" stroke="#6e4622" stroke-width="1.15" fill="none"/>
<path d="M413.5 401.5 Q471.9 362.5 519.8 368.8" stroke="#6e4622" stroke-width="1.15" fill="none"/>
<path d="M419.3 406.5 Q475.3 369.0 521.5 374.7" stroke="#6e4622" stroke-width="1.15" fill="none"/>
<path d="M425.2 411.4 Q478.7 375.6 523.1 380.6" stroke="#6e4622" stroke-width="1.15" fill="none"/>
<path d="M431.0 416.4 Q482.2 382.1 524.8 386.5" stroke="#6e4622" stroke-width="1.15" fill="none"/>
<path d="M436.9 421.4 Q485.6 388.6 526.4 392.5" stroke="#6e4622" stroke-width="1.15" fill="none"/>
<path d="M442.7 426.3 Q489.0 395.1 528.0 398.4" stroke="#6e4622" stroke-width="1.15" fill="none"/>
<path d="M448.6 431.3 Q492.4 401.6 529.7 404.3" stroke="#6e4622" stroke-width="1.15" fill="none"/>
<path d="M454.4 436.3 Q495.8 408.1 531.3 410.2" stroke="#6e4622" stroke-width="1.15" fill="none"/>
<path d="M460.3 441.3 Q499.3 414.6 532.9 416.2" stroke="#6e4622" stroke-width="1.15" fill="none"/>
<path d="M466.1 446.2 Q502.7 421.1 534.6 422.1" stroke="#6e4622" stroke-width="1.15" fill="none"/>
<path d="M489 328 L508.4 327.3 L523 384.5 L536.2 428 L531 434 L518 440 Z" fill="#e2b382" opacity="0.7"/>
<path d="M489 328 L518 440" stroke="#4e3018" stroke-width="1.4" fill="none"/>
<ellipse cx="481.0" cy="334.0" rx="2.6" ry="2" fill="#a89078"/>
<ellipse cx="481.5" cy="333.4" rx="1.6" ry="1" fill="#e8e0d8"/>
<ellipse cx="483.4" cy="341.8" rx="2.6" ry="2" fill="#a89078"/>
<ellipse cx="483.9" cy="341.2" rx="1.6" ry="1" fill="#e8e0d8"/>
<ellipse cx="485.8" cy="349.7" rx="2.6" ry="2" fill="#a89078"/>
<ellipse cx="486.3" cy="349.1" rx="1.6" ry="1" fill="#e8e0d8"/>
<ellipse cx="488.2" cy="357.5" rx="2.6" ry="2" fill="#a89078"/>
<ellipse cx="488.7" cy="356.9" rx="1.6" ry="1" fill="#e8e0d8"/>
<ellipse cx="490.5" cy="365.4" rx="2.6" ry="2" fill="#a89078"/>
<ellipse cx="491.0" cy="364.8" rx="1.6" ry="1" fill="#e8e0d8"/>
<ellipse cx="492.9" cy="373.2" rx="2.6" ry="2" fill="#a89078"/>
<ellipse cx="493.4" cy="372.6" rx="1.6" ry="1" fill="#e8e0d8"/>
<ellipse cx="495.3" cy="381.1" rx="2.6" ry="2" fill="#a89078"/>
<ellipse cx="495.8" cy="380.5" rx="1.6" ry="1" fill="#e8e0d8"/>
<ellipse cx="497.7" cy="388.9" rx="2.6" ry="2" fill="#a89078"/>
<ellipse cx="498.2" cy="388.3" rx="1.6" ry="1" fill="#e8e0d8"/>
<ellipse cx="500.1" cy="396.8" rx="2.6" ry="2" fill="#a89078"/>
<ellipse cx="500.6" cy="396.2" rx="1.6" ry="1" fill="#e8e0d8"/>
<ellipse cx="502.5" cy="404.6" rx="2.6" ry="2" fill="#a89078"/>
<ellipse cx="503.0" cy="404.0" rx="1.6" ry="1" fill="#e8e0d8"/>
<ellipse cx="504.8" cy="412.5" rx="2.6" ry="2" fill="#a89078"/>
<ellipse cx="505.3" cy="411.9" rx="1.6" ry="1" fill="#e8e0d8"/>
<ellipse cx="507.2" cy="420.3" rx="2.6" ry="2" fill="#a89078"/>
<ellipse cx="507.7" cy="419.7" rx="1.6" ry="1" fill="#e8e0d8"/>
<ellipse cx="509.6" cy="428.2" rx="2.6" ry="2" fill="#a89078"/>
<ellipse cx="510.1" cy="427.6" rx="1.6" ry="1" fill="#e8e0d8"/>
<ellipse cx="512.0" cy="436.0" rx="2.6" ry="2" fill="#a89078"/>
<ellipse cx="512.5" cy="435.4" rx="1.6" ry="1" fill="#e8e0d8"/>
<path d="M433 332 L497 452" stroke="#7a5030" stroke-width="3.4" fill="none"/>
<path d="M433 332 L497 452" stroke="#f3e4c8" stroke-width="2.4" stroke-dasharray="3.2 1.6" fill="none"/>
<circle cx="446.0" cy="334.0" r="1.4" fill="#f4e8d8" stroke="#6a4020" stroke-width="0.9"/>
<circle cx="450.3" cy="341.0" r="1.4" fill="#f4e8d8" stroke="#6a4020" stroke-width="0.9"/>
<circle cx="454.6" cy="348.0" r="1.4" fill="#f4e8d8" stroke="#6a4020" stroke-width="0.9"/>
<circle cx="458.9" cy="355.0" r="1.4" fill="#f4e8d8" stroke="#6a4020" stroke-width="0.9"/>
<circle cx="463.2" cy="362.0" r="1.4" fill="#f4e8d8" stroke="#6a4020" stroke-width="0.9"/>
<circle cx="467.5" cy="369.0" r="1.4" fill="#f4e8d8" stroke="#6a4020" stroke-width="0.9"/>
<circle cx="471.8" cy="376.0" r="1.4" fill="#f4e8d8" stroke="#6a4020" stroke-width="0.9"/>
<circle cx="476.1" cy="383.0" r="1.4" fill="#f4e8d8" stroke="#6a4020" stroke-width="0.9"/>
<circle cx="480.4" cy="390.0" r="1.4" fill="#f4e8d8" stroke="#6a4020" stroke-width="0.9"/>
<circle cx="484.7" cy="397.0" r="1.4" fill="#f4e8d8" stroke="#6a4020" stroke-width="0.9"/>
<circle cx="489.0" cy="404.0" r="1.4" fill="#f4e8d8" stroke="#6a4020" stroke-width="0.9"/>
<ellipse cx="405.0" cy="352.0" rx="4.4" ry="3.2" fill="#8e8a8c"/>
<ellipse cx="404.6" cy="351.0" rx="3" ry="1.6" fill="#c8c4c4"/>
<ellipse cx="409.2" cy="358.0" rx="4.4" ry="3.2" fill="#8e8a8c"/>
<ellipse cx="408.8" cy="357.0" rx="3" ry="1.6" fill="#c8c4c4"/>
<ellipse cx="413.4" cy="364.0" rx="4.4" ry="3.2" fill="#8e8a8c"/>
<ellipse cx="413.0" cy="363.0" rx="3" ry="1.6" fill="#c8c4c4"/>
<ellipse cx="417.6" cy="370.0" rx="4.4" ry="3.2" fill="#8e8a8c"/>
<ellipse cx="417.2" cy="369.0" rx="3" ry="1.6" fill="#c8c4c4"/>
<ellipse cx="421.8" cy="376.0" rx="4.4" ry="3.2" fill="#8e8a8c"/>
<ellipse cx="421.4" cy="375.0" rx="3" ry="1.6" fill="#c8c4c4"/>
<path d="M420 345 C421 339 428 338 429 344 M426 350 C427 344 434 343 435 349" stroke="#6a4020" stroke-width="1" fill="none"/>
<ellipse cx="497" cy="447" rx="3.5" ry="1.6" fill="#f3e6d6" stroke="#6a4020" stroke-width="0.6"/>
<ellipse cx="509" cy="443" rx="3.2" ry="1.5" fill="#f3e6d6" stroke="#6a4020" stroke-width="0.6"/>
<path d="M372.5 366.7 Q447.9 317.0 508.4 327.3 L523 384.5 L536.2 428 C535.6 431 534 432.5 531 434 L492 453.4 L472 451.2 Z" fill="none" stroke="#4a2e16" stroke-width="1.3"/>
<path d="M372.5 366.7 L472 451.2" stroke="#5a3a1c" stroke-width="2"/>
<path d="M423 292 L440 320" stroke="#8a8480" stroke-width="5.4" stroke-linecap="round" fill="none"/>
<path d="M423 292 L440 320" stroke="#e2dedb" stroke-width="4" stroke-linecap="round" fill="none"/>
<ellipse cx="464.0" cy="328.0" rx="2.2" ry="4.4" fill="#dcd8d6" stroke="#8a8480" stroke-width="0.6"/>
<ellipse cx="468.2" cy="326.8" rx="2.2" ry="4.4" fill="#dcd8d6" stroke="#8a8480" stroke-width="0.6"/>
<ellipse cx="472.4" cy="325.6" rx="2.2" ry="4.4" fill="#dcd8d6" stroke="#8a8480" stroke-width="0.6"/>
<ellipse cx="476.6" cy="324.4" rx="2.2" ry="4.4" fill="#dcd8d6" stroke="#8a8480" stroke-width="0.6"/>
<ellipse cx="459" cy="328" rx="3.4" ry="4.6" fill="#c92c9a"/>
<path d="M240 436 C241 432 250 431 252 434 L253 440 C252 443 247 445 243 444 Z" fill="#26282c"/>
<path d="M237.5 441 C238 438 246 437 248 440 L248 445 C246 447 240 447 238 445 Z" fill="#3a3c40"/>
<ellipse cx="243" cy="442.6" rx="3.4" ry="1.8" fill="#b8bcc0"/>
<ellipse cx="251.2" cy="461.7" rx="15.2" ry="14.7" fill="#2e3034"/>
<ellipse cx="252.2" cy="462.2" rx="11.6" ry="11.2" fill="#45474b"/>
<ellipse cx="253" cy="462.8" rx="7" ry="6.8" fill="#2a2c30"/>
<ellipse cx="253.4" cy="463" rx="3.6" ry="3.4" fill="#55585c"/>
<path d="M232 449.5 L255 466.5" stroke="#2a2c30" stroke-width="5.2" stroke-linecap="round"/>
<path d="M232 449.5 L255 466.5" stroke="#9a9ca0" stroke-width="3.2" stroke-linecap="round"/>
<path d="M236 448 L242 444" stroke="#3a3c40" stroke-width="2.4"/>
</g>
<path d="M174.8 486.3 L170.4 469.8" stroke="#5e9a6e" stroke-width="1"/>
<path d="M170 466.5 L170.6 468.2" stroke="#6aa87a" stroke-width="1"/>
<path d="M174.8 486.3 L193 480.2" stroke="#b05060" stroke-width="1"/>
<path d="M195.2 479.6 L197.4 479" stroke="#b06070" stroke-width="1"/>
<path d="M174.8 486.3 L181.3 495.8" stroke="#4a5060" stroke-width="1.1"/>
</svg>
<svg width="1024" height="576" viewBox="0 0 1024 576" style="left:0;top:0">
<!-- title pdf icon -->
<rect x="2.6" y="2.3" width="7.4" height="9.4" rx="1" fill="#fbeaea" stroke="#b86a6a" stroke-width="1"/>
<path d="M6.3 4.5v3.2M4.3 9.3l2-1.6 2 1.6" stroke="#c0504d" stroke-width="1.1" fill="none"/>
<!-- window controls -->
<path d="M946.6 6.5h6.7" stroke="#222" stroke-width="0.9"/>
<rect x="975.3" y="4.6" width="5.3" height="5.2" fill="none" stroke="#222" stroke-width="0.9"/>
<path d="M977 4.6v-1.3h5.2v5.2h-1.6" fill="none" stroke="#222" stroke-width="0.9"/>
<path d="M1004.6 3.2l6.8 6.8M1011.4 3.2l-6.8 6.8" stroke="#222" stroke-width="0.9"/>
<!-- tab close -->
<path d="M269 38.2l4.4 4.2M273.4 38.2l-4.4 4.2" stroke="#333" stroke-width="1.1"/>
<!-- help circle -->
<circle cx="926.4" cy="38.6" r="5.9" fill="none" stroke="#444" stroke-width="1"/>
<text x="926.4" y="41.7" font-family="Liberation Sans" font-size="8.5" font-weight="700" fill="#444" text-anchor="middle">?</text>
<!-- save (disabled) -->
<path d="M10.2 59.3h8.8l3.2 3.2v9.3h-12z" fill="none" stroke="#b3b3b3" stroke-width="1"/>
<path d="M13 59.3v4.4h6v-4.4M13 71.8v-4.6h6.4v4.6" fill="none" stroke="#b3b3b3" stroke-width="1"/>
<!-- star -->
<path d="M44.1 59.3l2.2 4.6 5 .6-3.7 3.4 1 4.9-4.5-2.5-4.5 2.5 1-4.9-3.7-3.4 5-.6z" fill="none" stroke="#555" stroke-width="1.1" stroke-linejoin="round"/>
<!-- printer -->
<rect x="67.2" y="59.6" width="9.4" height="4" fill="none" stroke="#555" stroke-width="1.1"/>
<rect x="64.6" y="63.2" width="14.4" height="6.2" rx="1" fill="#555"/>
<rect x="67.2" y="66.8" width="9.4" height="5.2" fill="#fafafa" stroke="#555" stroke-width="1.1"/>
<path d="M69 69h5.6" stroke="#888" stroke-width="0.8"/>
<!-- mail -->
<rect x="93.6" y="60.3" width="13.6" height="10.2" fill="none" stroke="#555" stroke-width="1.1"/>
<path d="M93.6 60.8l6.8 5.4 6.8-5.4M93.6 70l5-4M107.2 70l-5-4" fill="none" stroke="#555" stroke-width="0.9"/>
<!-- zoom search -->
<circle cx="127.6" cy="64.6" r="5.2" fill="none" stroke="#555" stroke-width="1.2"/>
<path d="M131.4 68.4l4.6 4.4" stroke="#555" stroke-width="1.5"/>
<path d="M125.2 64.6h0.8M127.2 64.6h0.8M129.2 64.6h0.8" stroke="#666" stroke-width="1.1"/>
<!-- up / down circles -->
<circle cx="278.3" cy="66.1" r="6.2" fill="none" stroke="#b5b5b5" stroke-width="1.1"/>
<path d="M278.3 70v-7.6M275.4 65.3l2.9-2.9 2.9 2.9" fill="none" stroke="#b5b5b5" stroke-width="1.1"/>
<circle cx="306.5" cy="66.1" r="6.2" fill="none" stroke="#b5b5b5" stroke-width="1.1"/>
<path d="M306.5 62.2v7.6M303.6 66.9l2.9 2.9 2.9-2.9" fill="none" stroke="#b5b5b5" stroke-width="1.1"/>
<!-- page underline -->
<path d="M327.4 74.5h16.6" stroke="#c8c8c8" stroke-width="1"/>
<!-- separators -->
<path d="M373 57v18" stroke="#dadada" stroke-width="1"/>
<path d="M621.5 56v18.5" stroke="#dadada" stroke-width="1"/>
<!-- cursor -->
<path d="M390.2 59.3v12.6l2.9-2.6 2.5 4.3 1.7-.9-2.3-4.2 3.7-.1z" fill="#595959"/>
<!-- hand -->
<path d="M415.2 65.6 C415 64.4 416.2 63.6 417 64 L418.4 65 L418.2 61 C418.2 59.8 419.2 59.2 420 59.4 C420.6 58.6 421.8 58.4 422.4 58.8 C423.2 58.4 424.6 58.8 425 59.6 C426 59.4 427.2 60 427.4 61 C428.4 61.2 428.9 62.2 428.9 63.2 L428.8 68.6 C428.6 71 427 72.8 424.6 73 L421.6 73.1 C419.4 73 418.2 71.6 417.2 70 Z" fill="#f4f8fc" stroke="#3b5f82" stroke-width="1.1" stroke-linejoin="round"/>
<path d="M418.8 60.2 L428.4 62 L428.4 66 L418.8 65.6 Z" fill="#bcd8ef" opacity="0.85"/>
<path d="M420.6 60 V65.2 M423.2 59.2 V65 M425.8 60 V65.2" stroke="#3b5f82" stroke-width="0.9"/>
<!-- minus / plus -->
<circle cx="449.8" cy="66.3" r="6.1" fill="none" stroke="#555" stroke-width="1.2"/>
<path d="M446.6 66.3h6.4" stroke="#555" stroke-width="1.4"/>
<circle cx="478.1" cy="66.3" r="6.1" fill="none" stroke="#555" stroke-width="1.2"/>
<path d="M474.9 66.3h6.4M478.1 63.1v6.4" stroke="#555" stroke-width="1.4"/>
<!-- zoom dropdown -->
<path d="M499.6 74.2h43.9" stroke="#c8c8c8" stroke-width="1"/>
<path d="M534.8 65.4h5l-2.5 2.9z" fill="#555"/>
<!-- fit page icon -->
<path d="M558.6 59.4h8.2l3.4 3.4v9.1h-11.6z" fill="#e0f1fa" stroke="#2e5f83" stroke-width="1.2" stroke-linejoin="round"/>
<circle cx="567.3" cy="61.5" r="1" fill="#2e5f83"/>
<path d="M564.2 62.6l-1.2 1.4h2.4zM564.2 69.6l-1.2-1.4h2.4zM560.8 66.1l1.4-1.2v2.4zM567.6 66.1l-1.4-1.2v2.4z" fill="#2e5f83"/>
<path d="M573.8 65.2h4.4l-2.2 2.6z" fill="#2e5f83"/>
<!-- download/scroll icon -->
<rect x="593.8" y="60.2" width="13" height="4.3" rx="1" fill="none" stroke="#555" stroke-width="1.2"/>
<path d="M595.8 62.3h1M597.8 62.3h1M599.8 62.3h1M601.8 62.3h1M603.8 62.3h1" stroke="#555" stroke-width="1"/>
<path d="M600.3 65.5v7M597.4 69.7l2.9 2.9 2.9-2.9" fill="none" stroke="#555" stroke-width="1.2"/>
<!-- comment -->
<path d="M635.8 60h12.2v9h-7.6l-2.4 2.8v-2.8h-2.2z" fill="#fafafa" stroke="#555" stroke-width="1.2" stroke-linejoin="round"/>
<path d="M638.2 63h7.4M638.2 65.6h5.4" stroke="#777" stroke-width="0.9"/>
<!-- highlighter -->
<g transform="translate(671.4 65.2) rotate(-45)">
<rect x="-5.8" y="-2" width="12.6" height="4" rx="2" fill="#fafafa" stroke="#555" stroke-width="1.2"/>
<path d="M-5.8 -1.6 L-8.6 0 L-5.8 1.6 Z" fill="#555" stroke="#555" stroke-width="0.8" stroke-linejoin="round"/>
<path d="M-3 -2 V2" stroke="#555" stroke-width="0.9"/>
</g>
<path d="M666 71.8 H677.4" stroke="#cdcdcd" stroke-width="1.5"/>
<!-- pen sign -->
<g transform="translate(697 65.4) rotate(-45)">
<path d="M-8.2 0 L-2.4 -3.4 Q2.4 -3.6 3.6 -2 L3.6 2 Q2.4 3.6 -2.4 3.4 Z" fill="#fafafa" stroke="#555" stroke-width="1.2" stroke-linejoin="round"/>
<path d="M-8.2 0 H-1.4" stroke="#555" stroke-width="1"/>
<circle cx="-0.6" cy="0" r="0.9" fill="#555"/>
<path d="M3.6 -1.6 H6.4 M3.6 1.6 H6.4 M6.4 -2 V2" stroke="#555" stroke-width="1.1" fill="none"/>
</g>
<path d="M699.6 71.4 c.6-1.4 1.2-1.4 1.4-.2 .2 1 .7 1 1.2 .1 .5-.9 1-.9 1.3 .1 .3 .8 .8 .7 1.6 .1" fill="none" stroke="#555" stroke-width="1"/>
<!-- doc edit -->
<path d="M721.4 61.6 V59.5 H726.8 L731 63.8 V65" fill="none" stroke="#555" stroke-width="1.2" stroke-linejoin="round"/>
<path d="M726.8 60.2 V64 H730.4 Z" fill="#fafafa" stroke="#555" stroke-width="1.1" stroke-linejoin="round"/>
<rect x="719.2" y="62" width="4.6" height="2.6" fill="#555"/>
<path d="M721.4 67 V71.4 H724.8" fill="none" stroke="#555" stroke-width="1.2"/>
<g transform="translate(729.6 69.6) rotate(-42)">
<rect x="-5.2" y="-1.3" width="10.4" height="2.6" fill="#fafafa" stroke="#555" stroke-width="1.1"/>
<path d="M-5.2 -1.3 L-7 0 L-5.2 1.3Z" fill="#555"/>
</g>
<path d="M826.5 81v469" stroke="#dedede" stroke-width="1"/>
<path d="M837.5 81v469" stroke="#e0e0e0" stroke-width="1"/>
<path d="M818.3 544.4l2.3 2.3 2.3-2.3" fill="none" stroke="#999" stroke-width="0.9"/>
<!-- side arrows -->
<path d="M4.2 312.3v7l3.4-3.5z" fill="#555"/>
<path d="M830.2 312.6v7l3.4-3.5z" fill="#555"/>
<path d="M818.3 88.8l2.3-2.3 2.3 2.3" fill="none" stroke="#999" stroke-width="0.9"/>
<!-- right panel search box -->
<rect x="848.5" y="91.5" width="165.8" height="21.3" fill="#ffffff" stroke="#d6d6d6" stroke-width="1"/>
<!-- export icon -->
<path d="M856 129h8.6l3.4 3.4v10.2h-12z" fill="#d9f2f1" stroke="#2f7b7a" stroke-width="1.2" stroke-linejoin="round"/>
<path d="M860.6 132.4v3.2M858.4 138.4l2.2-2.4 2.2 2.4" fill="none" stroke="#6aa6a5" stroke-width="0.9"/>
<circle cx="866.4" cy="140" r="3.9" fill="#2f8584"/>
<path d="M864.2 140h4.2M866.8 138.5l1.6 1.5-1.6 1.5" fill="none" stroke="#e8fbfa" stroke-width="1"/>
<!-- chevrons -->
<path d="M990.2 139.2l3.7-3.7 3.7 3.7" fill="none" stroke="#333" stroke-width="1.5"/>
<path d="M990.8 296.6l3.4 3.4 3.4-3.4" fill="none" stroke="#333" stroke-width="1.5"/>
<!-- separators panel -->
<path d="M839 148.5h175" stroke="#e2e2e2" stroke-width="1"/>
<path d="M839 252.8h185" stroke="#e2e2e2" stroke-width="1"/>
<path d="M839 451.8h185" stroke="#dedede" stroke-width="1"/>
<!-- scrollbar 1 -->
<rect x="1014.5" y="123" width="9.5" height="25.5" fill="#f4f4f4"/>
<path d="M1016.8 129.6l2.4-2.4 2.4 2.4" fill="none" stroke="#444" stroke-width="1.1"/>
<rect x="1014.5" y="133.6" width="9.5" height="14.6" fill="#c6c6c6"/>
<!-- copy icon -->
<circle cx="1008.6" cy="165.6" r="3.2" fill="#c8c8c8" stroke="#a8a8a8" stroke-width="0.8"/>
<circle cx="1011.2" cy="167.8" r="3.2" fill="#f0f0f0" stroke="#a8a8a8" stroke-width="0.8"/>
<!-- blue button 1 -->
<rect x="848.2" y="219.4" width="166.4" height="19" rx="9.5" fill="#2b7de1"/>
<!-- scrollbar 2 -->
<rect x="1014.5" y="253.3" width="9.5" height="198" fill="#f0f0f0"/>
<rect x="1014.5" y="253.3" width="9.5" height="131.6" fill="#c8c8c8"/>
<path d="M1017 444.6l2.4 2.4 2.4-2.4" fill="none" stroke="#444" stroke-width="1.1"/>
<!-- tools icons -->
<!-- edytuj -->
<rect x="855.6" y="262.4" width="13.2" height="5" rx="0.8" fill="#f6c9e4" stroke="#b23f87" stroke-width="1"/>
<rect x="855.6" y="270.6" width="5.2" height="5.2" rx="0.8" fill="#f6c9e4" stroke="#b23f87" stroke-width="1"/>
<rect x="863.4" y="270.4" width="5.6" height="5.6" fill="#d9b6cc"/>
<!-- utworz -->
<path d="M855.8 291.4h7.6l3.2 3.2v4M861.8 305h-6v-13.6" fill="#fbe6e6" stroke="#b33b3f" stroke-width="1.1" stroke-linejoin="round"/>
<path d="M859.7 294.4v3M857.8 300.3l1.9-2.2 1.9 2.2" fill="none" stroke="#d98889" stroke-width="0.8"/>
<circle cx="866.3" cy="302" r="3.9" fill="#c7343a"/>
<path d="M864.2 302h4.2M866.3 299.9v4.2" stroke="#fff" stroke-width="1.1"/>
<!-- skomentuj -->
<path d="M855.4 320.4h13.4v10.4h-8.4l-2.4 2.6v-2.6h-2.6z" fill="#e0c63c" stroke="#c9a81a" stroke-width="0.8" stroke-linejoin="round"/>
<path d="M858.2 323.8h7.6M858.2 326.6h5.6" stroke="#fbf2c4" stroke-width="1"/>
<!-- polacz -->
<path d="M855 349.6h6.4v10.4h-6.4z" fill="#eceafd" stroke="#5a55c8" stroke-width="1.1"/>
<path d="M863.6 349.4h4.2l2.2 2.2v8.6h-6.4z" fill="#5d58d2"/>
<path d="M858.2 352v3.6M856.7 357.2l1.5-1.6 1.5 1.6" fill="none" stroke="#7a76d6" stroke-width="0.8"/>
<path d="M862.5 358v5.2M860.6 361.4l1.9 1.9 1.9-1.9" fill="none" stroke="#4a45bf" stroke-width="1.3"/>
<!-- skompresuj -->
<path d="M857.2 380h9.8l2 2v10.2h-11.8z" fill="#d6f3f4" stroke="#2a7f86" stroke-width="1.1" stroke-linejoin="round"/>
<path d="M855 384.4l2 2-2 2M870.8 384.4l-2 2 2 2" fill="none" stroke="#2a7f86" stroke-width="1"/>
<path d="M862.9 382.8v3M860.9 389l2-2.2 2 2.2" fill="none" stroke="#3a8d94" stroke-width="0.9"/>
<!-- redaguj -->
<path d="M856 419.8l1.6-3 7.6-6.2c.8-.6 2 .4 1.4 1.2l-6.6 7.4z" fill="#f7c3df" stroke="#c2307e" stroke-width="1.1" stroke-linejoin="round"/>
<path d="M860.8 418.6h8.6v2.2h-13" fill="#d1338a" stroke="#c2307e" stroke-width="0.6"/>
<!-- chron -->
<path d="M862.3 439.4c1.6 1 3.4 1.5 5.4 1.5v4.6c0 3.3-2.2 5.4-5.4 6.6-3.2-1.2-5.4-3.3-5.4-6.6v-4.6c2 0 3.8-.5 5.4-1.5z" fill="#e3e1f5" stroke="#5b5aa8" stroke-width="1.1"/>
<!-- blue button 2 -->
<rect x="864.3" y="506" width="133.6" height="25.2" rx="12.6" fill="#2b7de1"/>
<!-- 3D toolbar -->
<rect x="148.8" y="105.4" width="452.2" height="21.6" fill="#dcdcdc"/>
<rect x="154" y="106" width="27.6" height="20.6" fill="#e8e8e8" stroke="#cfcfcf" stroke-width="0.6"/>
<path d="M174.2 106.4v20" stroke="#cfcfcf" stroke-width="0.8"/>
<path d="M165.2 107.8 Q168.2 113.2 173.6 116.2 Q168.2 119.2 165.2 124.6 Q162.2 119.2 156.8 116.2 Q162.2 113.2 165.2 107.8Z" fill="#1b3048"/>
<path d="M165.2 110.8 Q166.4 115 170.4 116.2 Q166.4 117.4 165.2 121.6 Q164 117.4 160 116.2 Q164 115 165.2 110.8Z" fill="#3d6d98"/>
<ellipse cx="163.4" cy="114.6" rx="2.2" ry="1.8" fill="#a9d0ec"/>
<path d="M176.4 115.4h3l-1.5 1.8z" fill="#666"/>
<path d="M193.4 107v19" stroke="#c6c6c6" stroke-width="0.8"/>
<path d="M211.8 116.2l5.1-4.8 5.1 4.8M213.4 115v5.6h7v-5.6" fill="#f2d36a" stroke="#7a5a1a" stroke-width="1.1" stroke-linejoin="round"/>
<rect x="215.8" y="117.6" width="2.2" height="3" fill="#7a5a1a"/>
<rect x="237.6" y="109.2" width="90.4" height="14.8" fill="#ffffff" stroke="#8a8a8a" stroke-width="0.8"/>
<path d="M320.2 116l2.3 2.3 2.3-2.3" fill="none" stroke="#555" stroke-width="0.9"/>
<rect x="343.6" y="108.6" width="4.2" height="4" fill="#cfe4f3" stroke="#2f6da3" stroke-width="1.1"/>
<path d="M347.8 110.6h7.8M345.6 112.6v9.2h2.8M345.6 116.8h2.8" fill="none" stroke="#2f6da3" stroke-width="1.3"/>
<rect x="348.6" y="114.6" width="4" height="4" fill="#cfe4f3" stroke="#2f6da3" stroke-width="1.1"/>
<rect x="348.6" y="119.2" width="4" height="3.6" fill="#cfe4f3" stroke="#2f6da3" stroke-width="1.1"/>
<path d="M352.6 116.6h3.2M352.6 121h3.2" stroke="#2f6da3" stroke-width="1.3"/>
<path d="M371.8 107v19" stroke="#c6c6c6" stroke-width="0.8"/>
<path d="M389.6 111.8v9.4l11-4.7z" fill="#8c8c8c" stroke="#6e6e6e" stroke-width="0.6"/>
<path d="M405.2 115.4h3l-1.5 1.8z" fill="#999"/>
<path d="M427 112.2l6-2.6 5.6 2.6v7.8l-5.6 2.6-6-2.6z" fill="#2f78c4"/>
<path d="M427 112.2l6 2.6 5.6-2.6-5.6-2.6z" fill="#7cc0ec"/>
<path d="M433 114.8v7.8l5.6-2.6v-7.8z" fill="#1e5a9e"/>
<path d="M462.4 112l5-2.4 4.8 2.4v7l-4.8 2.4-5-2.4z" fill="#2f78c4"/>
<path d="M462.4 112l5 2.4 4.8-2.4-4.8-2.4z" fill="#7cc0ec"/>
<path d="M467.4 114.4v7l4.8-2.4v-7z" fill="#1e5a9e"/>
<rect x="456.2" y="116.4" width="7.6" height="7.6" fill="#4cb52c" stroke="#2e8a1a" stroke-width="0.6"/>
<path d="M476.6 116.2h4l-2 2.2z" fill="#333"/>
<rect x="491.4" y="106" width="27.6" height="21" fill="#e6e6e6" stroke="#cdcdcd" stroke-width="0.6"/>
<path d="M511.4 106.4v20.4" stroke="#c8c8c8" stroke-width="0.8"/>
<path d="M498.6 113.6 L501.6 117.4 L499.4 120.6" fill="none" stroke="#7a7a76" stroke-width="2.2" stroke-linecap="round"/>
<ellipse cx="504.8" cy="112.6" rx="4.2" ry="3.2" transform="rotate(-35 504.8 112.6)" fill="#8a8a80"/>
<ellipse cx="505.6" cy="112" rx="3" ry="2.2" transform="rotate(-35 505.6 112)" fill="#ece47a"/>
<ellipse cx="500.6" cy="122" rx="4" ry="1.5" fill="#6a6a66"/>
<path d="M513.6 115.6h3l-1.5 1.8z" fill="#555"/>
<rect x="532.4" y="108.6" width="10.4" height="10" fill="#ffffff" stroke="#777" stroke-width="0.8"/>
<path d="M552.6 116.4h3.8l-1.9 2z" fill="#333"/>
<path d="M572 117.4l4.4-6.8h2.2l-2.4 10.4z" fill="#c2336a"/>
<path d="M578.6 110.6l3.2 2 4 9.4-3.4 .4z" fill="#a32a5e"/>
<path d="M576.2 121l2.4-10.4 3.8 11.4z" fill="#e04a82" stroke="#5ab0d8" stroke-width="0.5"/>
<path d="M588.2 115.6h3.6l-1.8 2z" fill="#555"/>
<!-- taskbar -->
<rect x="10.2" y="557.6" width="5.1" height="5.1" fill="#fff"/>
<rect x="16" y="557" width="5.2" height="5.7" fill="#fff"/>
<rect x="10.2" y="563.4" width="5.1" height="5.1" fill="#fff"/>
<rect x="16" y="563.4" width="5.2" height="5.7" fill="#fff"/>
<circle cx="45.4" cy="561.6" r="3.4" fill="none" stroke="#333" stroke-width="1.1"/>
<path d="M43 564.2l-4 4" stroke="#333" stroke-width="1.2"/>
<!-- task view -->
<rect x="261.2" y="559.6" width="6.8" height="6.6" fill="none" stroke="#ddd" stroke-width="1.1"/>
<path d="M261 557.8h7.2M261 568h7.2M270.6 558v1.6M270.6 561.8v1.6M270.6 565.4v2.6" stroke="#ddd" stroke-width="1.1"/>
<!-- edge -->
<circle cx="298.9" cy="562" r="8.2" fill="#2f8fd8"/>
<path d="M291.2 560.8c1-4.6 4.4-7 8.2-7 4.2 0 7.6 3 7.6 6.8 0 2.4-2 3.6-4.2 3.6-1.6 0-3-.6-3.6-1.4 1.6.2 2.6-.8 2.6-1.8 0-2-2.2-3.4-4.6-3.2-3 .2-5.4 1.4-6 3z" fill="#4fd17a"/>
<path d="M294.6 563.6c0-2 1.6-3.6 3.8-3.6" fill="none" stroke="#1b5fae" stroke-width="2"/>
<!-- firefox -->
<circle cx="330" cy="563.4" r="7.4" fill="#ff7139"/>
<circle cx="330.4" cy="564" r="4.4" fill="#7a3dd8"/>
<path d="M323 562c.6-4 3-6.6 6-7 .4 1.6 2.8 2.6 4.8 3.4 1.6.8 3 2.4 3.4 4.4-1.6-2.4-4-3-6.6-2.6-2.6.6-3.8 2-3.8 4z" fill="#ffbd2e"/>
<!-- blue C -->
<path d="M356.4 555.2h13.2l-1.2 15.6h-13.8z" fill="#1ea3e6"/>
<path d="M365.6 560.4c-.8-.8-1.8-1.2-3-1.2-2.4 0-4 1.6-4 3.8s1.6 3.8 4 3.8c1.2 0 2.2-.4 3-1.2" fill="none" stroke="#fff" stroke-width="2.2"/>
<!-- green icon -->
<path d="M385 556.4h7.6c3.4 0 6.2 3.4 6.2 7.4s-2.6 7.4-6 7.4h-7.8z" fill="#7bbf3a"/>
<path d="M388 559.6l5.6 6.6M389 566l4.6.4.2-4.4" fill="none" stroke="#e8f6d6" stroke-width="1.4"/>
<!-- white icon -->
<rect x="416.2" y="555.6" width="15.8" height="15.4" fill="#fdfdfd"/>
<path d="M424.8 557.4c-3.4 2-4.6 5.4-3.6 9.6M423 569c3.6-2 4.8-5.4 3.8-9.6" fill="none" stroke="#3b8ac8" stroke-width="1.2"/>
<path d="M421 563.4c2 .4 4.2.2 6.6-1" fill="none" stroke="#9ac13a" stroke-width="1.2"/>
<!-- acrobat active -->
<rect x="440.3" y="550" width="30.4" height="26" fill="#3b3637"/>
<rect x="448.6" y="556.2" width="13.8" height="13.8" rx="1.6" fill="#c81f1f"/>
<path d="M452 567.4c1.8-3.4 2.6-6 2.6-8 0-1.6.9-1.6 1 0 .2 2.6 1.4 5 4.2 6.4-2.6-.6-5.4-.2-7.8 1.6z" fill="none" stroke="#fff" stroke-width="1"/>
<!-- running indicators -->
<rect x="318" y="574.4" width="25" height="1.6" fill="#d8d8d8"/>
<rect x="349" y="574.4" width="25" height="1.6" fill="#d8d8d8"/>
<rect x="380" y="574.4" width="24.6" height="1.6" fill="#d8d8d8"/>
<rect x="411" y="574.4" width="26" height="1.6" fill="#d8d8d8"/>
<rect x="442" y="574.4" width="28" height="1.6" fill="#e8e8e8"/>
<!-- cloud -->
<path d="M779.6 567c-1.4 0-2-1-2-2.2 0-1.2 1-2.2 2.2-2.2.2-2.4 2-4 4.2-4 1.8 0 3.2 1 3.8 2.6 2.2-.2 4 1.4 4 3.2 0 1.6-1.2 2.6-2.6 2.6z" fill="#cfe6f4"/>
<!-- tray -->
<path d="M875 564.6l3.9-3.9 3.9 3.9" fill="none" stroke="#e6e6e6" stroke-width="1"/>
<rect x="892.4" y="559.2" width="5.4" height="6" rx="1" fill="none" stroke="#e0e0e0" stroke-width="1"/>
<path d="M890.6 563c.2 2.8 2 4.6 4.6 4.6s4.4-1.8 4.6-4.6" fill="none" stroke="#e0e0e0" stroke-width="0.9"/>
<rect x="904.6" y="560.4" width="9.6" height="5.4" rx="0.6" fill="#dcdcdc"/>
<rect x="914.2" y="561.8" width="1" height="2.6" fill="#dcdcdc"/>
<path d="M919.2 561.2h2l3-2.8v10l-3-2.8h-2z" fill="none" stroke="#e0e0e0" stroke-width="0.9"/>
<path d="M926 561c.8 1 .8 3 0 4M928.2 559.4c1.6 2 1.6 5.2 0 7.2" fill="none" stroke="#e0e0e0" stroke-width="0.9"/>
<path d="M937 568c.2-4.4 3.4-7.6 7.8-7.8M939.4 568c.2-3 2.4-5.2 5.4-5.4M941.6 568c.2-1.6 1.4-2.8 3-3" fill="none" stroke="#d0d0d0" stroke-width="0.9"/>
<circle cx="944.6" cy="567.6" r="0.7" fill="#e0e0e0"/>
<!-- notifications -->
<path d="M997.8 558.4h12.6v9.4h-5l-3.6 3.2v-3.2h-4z" fill="#f0f0f0"/>
<path d="M1000 561h8.2M1000 563.4h8.2M1000 565.8h5.6" stroke="#555" stroke-width="0.8"/>
<circle cx="1008.4" cy="568.2" r="5.4" fill="#2a2627" stroke="#b8b8b8" stroke-width="0.8"/>
<text x="1008.4" y="570.8" font-family="Liberation Sans" font-size="7" font-weight="700" fill="#fff" text-anchor="middle">14</text>
<path d="M1021.5 550v26" stroke="#6e6a6a" stroke-width="1"/>
</svg>

<div class="t" style="left:14.6px;top:4.36px;font-size:8.2px;font-weight:400;color:#222;transform:scaleX(0.902);">yak 23 22.01.201922.pdf - Adobe Acrobat Reader DC (32-bit)</div>
<div class="t" style="left:4.4px;top:18.06px;font-size:8.2px;font-weight:400;color:#333;transform:scaleX(0.932);"><u>P</u>lik</div>
<div class="t" style="left:25.5px;top:18.06px;font-size:8.2px;font-weight:400;color:#333;transform:scaleX(0.878);"><u>E</u>dycja</div>
<div class="t" style="left:56.2px;top:18.06px;font-size:8.2px;font-weight:400;color:#333;transform:scaleX(0.966);"><u>W</u>idok</div>
<div class="t" style="left:87.0px;top:18.06px;font-size:8.2px;font-weight:400;color:#333;transform:scaleX(0.914);"><u>P</u>odpis</div>
<div class="t" style="left:118.7px;top:18.06px;font-size:8.2px;font-weight:400;color:#333;transform:scaleX(0.960);"><u>O</u>kno</div>
<div class="t" style="left:146.8px;top:18.06px;font-size:8.2px;font-weight:400;color:#333;transform:scaleX(0.946);">Pomo<u>c</u></div>
<div class="t" style="left:13.2px;top:34.70px;font-size:9.8px;font-weight:400;color:#4b4b4b;transform:scaleX(1.006);">Strona główna</div>
<div class="t" style="left:100.7px;top:34.70px;font-size:9.8px;font-weight:400;color:#4b4b4b;transform:scaleX(0.988);">Narzędzia</div>
<div class="t" style="left:181.8px;top:34.70px;font-size:9.8px;font-weight:400;color:#4b4b4b;transform:scaleX(0.891);">yak 23 22.01.2019...</div>
<div class="t" style="left:952.7px;top:34.53px;font-size:10.0px;font-weight:700;color:#3a3a3a;transform:scaleX(1.049);">Zaloguj się</div>
<div class="t" style="left:334.0px;top:62.98px;font-size:9.0px;font-weight:400;color:#6a6a6a;transform:scaleX(0.598);-webkit-text-stroke:0.1px #6a6a6a;">1</div>
<div class="t" style="left:349.0px;top:62.98px;font-size:9.0px;font-weight:400;color:#6a6a6a;transform:scaleX(1.058);-webkit-text-stroke:0.1px #6a6a6a;">/ 1</div>
<div class="t" style="left:503.5px;top:62.98px;font-size:9.0px;font-weight:400;color:#777;transform:scaleX(0.803);-webkit-text-stroke:0.1px #777;">78,4%</div>
<div class="t" style="left:240.0px;top:113.46px;font-size:8.2px;font-weight:400;color:#222;transform:scaleX(0.936);-webkit-text-stroke:0.1px #222;">Widoki</div>
<div class="t" style="left:857.0px;top:99.35px;font-size:8.8px;font-weight:400;color:#9a9a9a;transform:scaleX(0.977);">Szukaj 'Dodaj łącze'</div>
<div class="t" style="left:876.0px;top:130.26px;font-size:10.8px;font-weight:400;color:#444;transform:scaleX(0.905);">Eksportuj plik PDF</div>
<div class="t" style="left:848.0px;top:164.87px;font-size:9.6px;font-weight:700;color:#333;transform:scaleX(0.915);">Adobe Acrobat Pro DC</div>
<div class="t" style="left:848.0px;top:183.52px;font-size:8.6px;font-weight:400;color:#555;transform:scaleX(0.965);">Konwertuj pliki PDF na dokumenty</div>
<div class="t" style="left:848.0px;top:194.02px;font-size:8.6px;font-weight:400;color:#555;transform:scaleX(0.965);">programu Word lub Excel Online</div>
<div class="t" style="left:893.0px;top:224.46px;font-size:10.8px;font-weight:400;color:#ffffff;transform:scaleX(0.944);">Więcej informacji</div>
<div class="t" style="left:876.0px;top:265.46px;font-size:10.8px;font-weight:400;color:#444;transform:scaleX(0.908);">Edytuj plik PDF</div>
<div class="t" style="left:876.0px;top:293.26px;font-size:10.8px;font-weight:400;color:#444;transform:scaleX(0.917);">Utwórz plik PDF</div>
<div class="t" style="left:876.5px;top:322.06px;font-size:10.8px;font-weight:400;color:#444;transform:scaleX(0.925);">Skomentuj</div>
<div class="t" style="left:876.0px;top:351.26px;font-size:10.8px;font-weight:400;color:#444;transform:scaleX(0.889);">Połącz pliki</div>
<div class="t" style="left:876.0px;top:381.46px;font-size:10.8px;font-weight:400;color:#444;transform:scaleX(0.911);">Skompresuj plik PDF</div>
<div class="t" style="left:876.0px;top:409.66px;font-size:10.8px;font-weight:400;color:#444;transform:scaleX(0.917);">Redaguj</div>
<div class="t" style="left:876.6px;top:438.86px;font-size:10.8px;font-weight:400;color:#444;transform:scaleX(0.901);">Chroń</div>
<div class="t" style="left:845.0px;top:474.85px;font-size:8.8px;font-weight:700;color:#333;transform:scaleX(0.950);">Konwertuj, edytuj i podpisuj elektronicznie</div>
<div class="t" style="left:859.0px;top:485.05px;font-size:8.8px;font-weight:700;color:#333;transform:scaleX(0.953);">formularze i umowy w formacie PDF</div>
<div class="t" style="left:872.5px;top:513.85px;font-size:8.8px;font-weight:400;color:#ffffff;transform:scaleX(0.859);">Bezpłatna, 7-dniowa wersja próbna</div>
<div class="t" style="left:56.5px;top:558.90px;font-size:9.8px;font-weight:400;color:#333;transform:scaleX(0.950);">Wpisz tu wyszukiwane słowa</div>
<div class="t" style="left:798.0px;top:559.07px;font-size:9.6px;font-weight:400;color:#f0f0f0;transform:scaleX(0.869);">3°C</div>
<div class="t" style="left:817.6px;top:559.07px;font-size:9.6px;font-weight:400;color:#f0f0f0;transform:scaleX(0.906);">Pochmurnie</div>
<div class="t" style="left:960.0px;top:553.29px;font-size:8.4px;font-weight:400;color:#f0f0f0;transform:scaleX(0.811);">13:25</div>
<div class="t" style="left:951.8px;top:565.09px;font-size:8.4px;font-weight:400;color:#f0f0f0;transform:scaleX(0.816);">28.01.2022</div>
</body></html>
